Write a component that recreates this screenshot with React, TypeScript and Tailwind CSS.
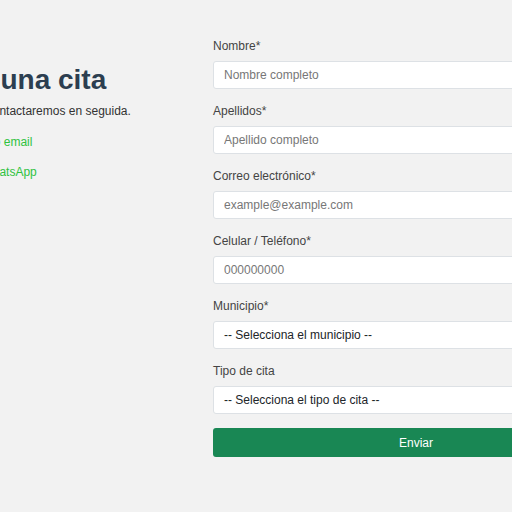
const fields = [
  { label: "Nombre*", placeholder: "Nombre completo", type: "text" },
  { label: "Apellidos*", placeholder: "Apellido completo", type: "text" },
  { label: "Correo electrónico*", placeholder: "example@example.com", type: "email" },
  { label: "Celular / Teléfono*", placeholder: "000000000", type: "tel" },
];

const selects = [
  { label: "Municipio*", option: "-- Selecciona el municipio --" },
  { label: "Tipo de cita", option: "-- Selecciona el tipo de cita --" },
];

export default function App() {
  return (
    <div
      className="w-full h-screen overflow-hidden bg-[#f2f2f2] pt-[37px]"
      style={{ fontFamily: '"Liberation Sans", Arial, sans-serif' }}
    >
      <div className="flex flex-row items-start">
        {/* left intro column */}
        <div className="ml-[-110px] w-[323px] shrink-0 mt-[26px]">
          <h1 className="text-[28px] leading-[34px] font-bold text-[#2c3e50] whitespace-nowrap">
            Agenda una cita
          </h1>
          <p className="mt-[5px] text-[12px] leading-[18px] text-[#333] whitespace-nowrap">
            Agenda tu cita, te contactaremos en seguida.
          </p>
          <a href="#" className="block mt-[13px] ml-[-3px] text-[12px] leading-[18px] text-[#2fc23f] whitespace-nowrap">
            Escríbenos a nuestro email
          </a>
          <a href="#" className="block mt-[12px] text-[12px] leading-[18px] text-[#2fc23f] whitespace-nowrap">
            Contáctanos por WhatsApp
          </a>
        </div>

        {/* form */}
        <form className="w-[406px] shrink-0 flex flex-col" onSubmit={(e) => e.preventDefault()}>
          {fields.map((f) => (
            <div key={f.label} className="mb-[13px]">
              <label className="block text-[12px] leading-[18px] text-[#444] mb-[6px]">{f.label}</label>
              <input
                type={f.type}
                placeholder={f.placeholder}
                className="block w-full h-[28px] px-[10px] bg-white border border-[#dde1e5] rounded-[3px] text-[12px] text-[#212529] placeholder:text-[#777]"
              />
            </div>
          ))}
          {selects.map((s) => (
            <div key={s.label} className="mb-[13px]">
              <label className="block text-[12px] leading-[18px] text-[#444] mb-[6px]">{s.label}</label>
              <div className="w-full h-[28px] px-[10px] bg-white border border-[#dde1e5] rounded-[3px] text-[12px] text-[#212529] flex items-center">
                {s.option}
              </div>
            </div>
          ))}
          <button
            type="submit"
            className="w-full h-[29px] mt-[1px] bg-[#198754] rounded-[3px] text-white text-[12px]"
          >
            Enviar
          </button>
        </form>
      </div>
    </div>
  );
}
